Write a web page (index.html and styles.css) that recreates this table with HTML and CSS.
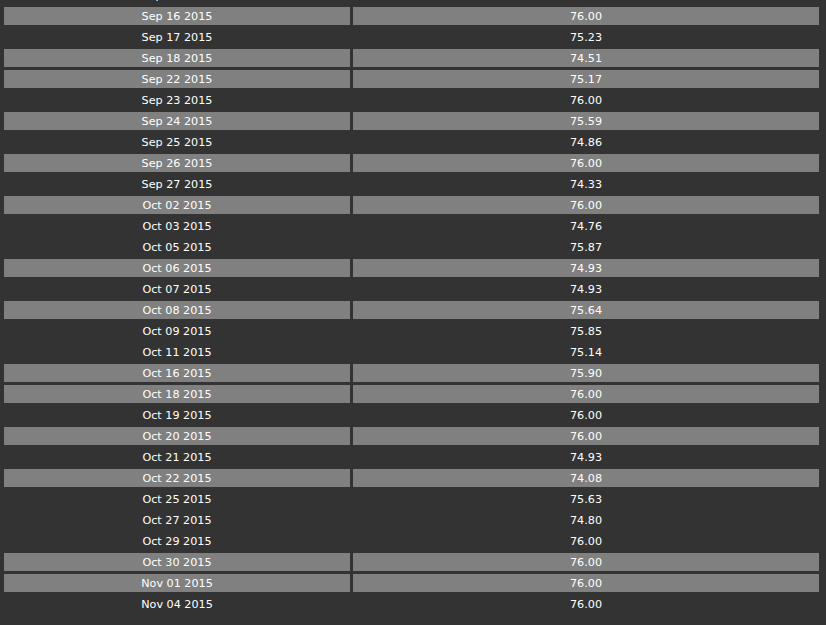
FILE: index.html
```html
<!DOCTYPE html>
<html>
<head>
<meta charset="utf-8">
<link rel="stylesheet" href="styles.css">
</head>
<body>
<div class="table">
  <div class="row first"><div class="cell">Sep 15 2015</div><div class="cell">75.00</div></div>
  <div class="row hl"><div class="cell">Sep 16 2015</div><div class="cell">76.00</div></div>
  <div class="row"><div class="cell">Sep 17 2015</div><div class="cell">75.23</div></div>
  <div class="row hl"><div class="cell">Sep 18 2015</div><div class="cell">74.51</div></div>
  <div class="row hl"><div class="cell">Sep 22 2015</div><div class="cell">75.17</div></div>
  <div class="row"><div class="cell">Sep 23 2015</div><div class="cell">76.00</div></div>
  <div class="row hl"><div class="cell">Sep 24 2015</div><div class="cell">75.59</div></div>
  <div class="row"><div class="cell">Sep 25 2015</div><div class="cell">74.86</div></div>
  <div class="row hl"><div class="cell">Sep 26 2015</div><div class="cell">76.00</div></div>
  <div class="row"><div class="cell">Sep 27 2015</div><div class="cell">74.33</div></div>
  <div class="row hl"><div class="cell">Oct 02 2015</div><div class="cell">76.00</div></div>
  <div class="row"><div class="cell">Oct 03 2015</div><div class="cell">74.76</div></div>
  <div class="row"><div class="cell">Oct 05 2015</div><div class="cell">75.87</div></div>
  <div class="row hl"><div class="cell">Oct 06 2015</div><div class="cell">74.93</div></div>
  <div class="row"><div class="cell">Oct 07 2015</div><div class="cell">74.93</div></div>
  <div class="row hl"><div class="cell">Oct 08 2015</div><div class="cell">75.64</div></div>
  <div class="row"><div class="cell">Oct 09 2015</div><div class="cell">75.85</div></div>
  <div class="row"><div class="cell">Oct 11 2015</div><div class="cell">75.14</div></div>
  <div class="row hl"><div class="cell">Oct 16 2015</div><div class="cell">75.90</div></div>
  <div class="row hl"><div class="cell">Oct 18 2015</div><div class="cell">76.00</div></div>
  <div class="row"><div class="cell">Oct 19 2015</div><div class="cell">76.00</div></div>
  <div class="row hl"><div class="cell">Oct 20 2015</div><div class="cell">76.00</div></div>
  <div class="row"><div class="cell">Oct 21 2015</div><div class="cell">74.93</div></div>
  <div class="row hl"><div class="cell">Oct 22 2015</div><div class="cell">74.08</div></div>
  <div class="row"><div class="cell">Oct 25 2015</div><div class="cell">75.63</div></div>
  <div class="row"><div class="cell">Oct 27 2015</div><div class="cell">74.80</div></div>
  <div class="row"><div class="cell">Oct 29 2015</div><div class="cell">76.00</div></div>
  <div class="row hl"><div class="cell">Oct 30 2015</div><div class="cell">76.00</div></div>
  <div class="row hl"><div class="cell">Nov 01 2015</div><div class="cell">76.00</div></div>
  <div class="row"><div class="cell">Nov 04 2015</div><div class="cell">76.00</div></div>
</div>
</body>
</html>
```
FILE: styles.css
```css
html, body {
  margin: 0;
  padding: 0;
  background: #333333;
  height: 100%;
  overflow: hidden;
}
body {
  font-family: "DejaVu Sans", Verdana, sans-serif;
  font-size: 11.2px;
  color: #ffffff;
}
.table {
  display: flex;
  flex-direction: column;
  gap: 3px;
  padding: 0 7px 0 4px;
}
.row {
  display: grid;
  grid-template-columns: 346px 466px;
  column-gap: 3px;
  height: 18px;
}
.row.first {
  margin-top: -14px;
}
.cell {
  box-sizing: border-box;
  height: 18px;
  padding-top: 2px;
  line-height: 16px;
  text-align: center;
  white-space: nowrap;
}
.row.hl .cell {
  background: #808080;
}
```
